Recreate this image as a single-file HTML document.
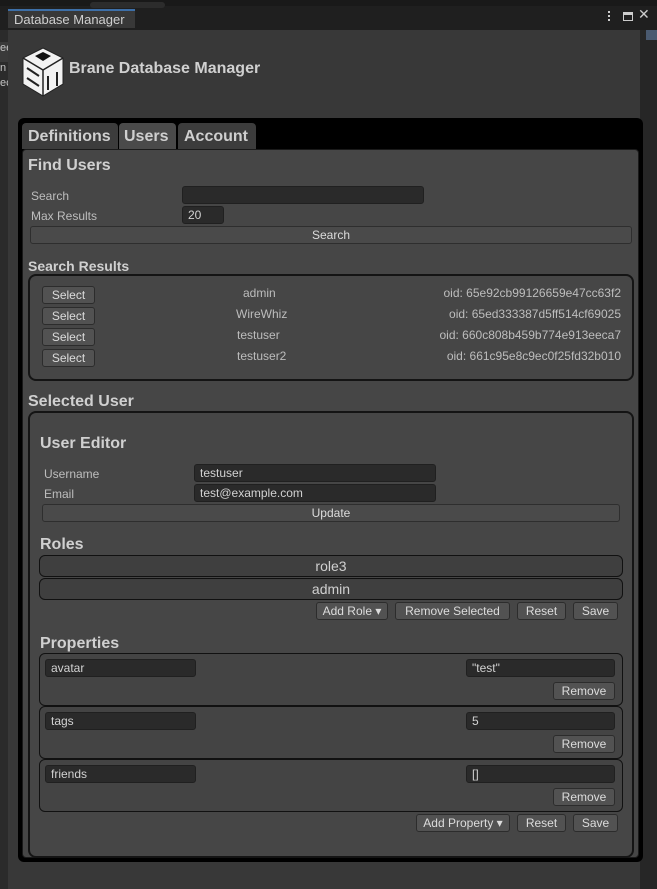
<!DOCTYPE html>
<html><head><style>
*{box-sizing:border-box;margin:0;padding:0}
body{width:657px;height:889px;background:#383838;position:relative;overflow:hidden;font-family:"Liberation Sans",sans-serif;color:#c4c4c4;font-size:12px}
.a{position:absolute}
.f{position:absolute;background:#2a2a2a;border:1px solid #202020;border-radius:3px;height:18px;padding-left:5px;line-height:17px;color:#d2d2d2;font-size:12px}
.b{position:absolute;background:#525252;border:1px solid #2c2c2c;border-radius:3px;height:18px;line-height:17px;text-align:center;color:#dcdcdc;font-size:12px}
.wb{background:#4a4a4a;border-color:#2e2e2e}
.h{position:absolute;font-weight:bold;font-size:16px;color:#d0d0d0;margin-top:1px}
.box{position:absolute;border:2px solid #141414;border-radius:8px}
.lab{position:absolute;font-size:12px;color:#bdbdbd;margin-top:1px}
.role{position:absolute;left:39px;width:584px;height:22px;background:#3f3f3f;border:1px solid #111;border-radius:6px;text-align:center;line-height:20px;font-size:14px;color:#d0d0d0}
.pb{position:absolute;left:39px;width:584px;height:53px;border:1px solid #111;border-radius:6px;background:#444}
</style></head><body>
<div class="a" style="left:0;top:0;width:657px;height:30px;background:#1f1f1f"></div>
<div class="a" style="left:0;top:0;width:657px;height:6px;background:#191919"></div>
<div class="a" style="left:90px;top:2px;width:75px;height:6px;background:#2c2c2c;border-radius:3px"></div>
<div class="a" style="left:0;top:30px;width:8px;height:859px;background:#2b2b2b"></div>
<div class="a" style="left:0;top:42px;width:8px;height:20px;background:#3a3a3a;font-size:11px;overflow:hidden">ee</div>
<div class="a" style="left:0;top:62px;width:8px;font-size:11px;overflow:hidden">n</div>
<div class="a" style="left:0;top:77px;width:8px;font-size:11px;overflow:hidden">ec</div>
<div class="a" style="left:8px;top:9px;width:127px;height:21px;background:#383838;border-top:2px solid #3d6fa8;padding-left:6px;line-height:18px;font-size:13px;color:#cfcfcf">Database Manager</div>
<div class="a" style="left:8px;top:28px;width:632px;height:2px;background:#1f1f1f"></div>
<div class="a" style="left:8px;top:30px;width:632px;height:859px;background:#383838"></div>
<div class="a" style="left:640px;top:30px;width:17px;height:859px;background:#262626"></div>
<div class="a" style="left:646px;top:30px;width:11px;height:10px;background:#4a5a70"></div>
<div class="a" style="left:608px;top:11px;width:2px;height:2px;background:#ccc;box-shadow:0 4px #ccc,0 8px #ccc"></div>
<div class="a" style="left:623px;top:12px;width:10px;height:9px;border:1px solid #ccc;border-top:3px solid #ccc"></div>
<div class="a" style="left:638px;top:6px;font-size:14px;color:#ccc">✕</div>
<svg class="a" style="left:21px;top:46px" width="44" height="52" viewBox="0 0 44 52">
<path d="M22 2 L42 12 L42 38 L22 50 L2 38 L2 12 Z" fill="#f2f2f2" stroke="#222" stroke-width="1"/>
<path d="M2 12 L22 24 L42 12 M22 24 L22 50" stroke="#222" stroke-width="1.5" fill="none"/>
<path d="M14 10 L22 6 L30 10 L22 15 Z" fill="#111"/>
<path d="M6 22 L18 30 M6 32 L18 40 M27 30 L27 44 M36 26 L36 40" stroke="#222" stroke-width="2" fill="none"/>
</svg>
<div class="h" style="left:69px;top:59px;font-size:16px">Brane Database Manager</div>
<div class="a" style="left:18px;top:118px;width:625px;height:744px;background:#000;border-radius:6px"></div>
<div class="a" style="left:22px;top:123px;width:96px;height:26px;background:#3c3c3c;border-radius:4px 4px 0 0;font-size:16px;font-weight:bold;line-height:27px;padding-left:6px;color:#cfcfcf">Definitions</div>
<div class="a" style="left:119px;top:123px;width:57px;height:26px;background:#4a4a4a;border-radius:4px 4px 0 0;font-size:16px;font-weight:bold;line-height:27px;padding-left:5px;color:#cfcfcf">Users</div>
<div class="a" style="left:178px;top:123px;width:78px;height:26px;background:#3c3c3c;border-radius:4px 4px 0 0;font-size:16px;font-weight:bold;line-height:27px;padding-left:6px;color:#cfcfcf">Account</div>
<div class="a" style="left:22px;top:149px;width:617px;height:709px;background:#464646;border:1px solid #1a1a1a;border-radius:4px"></div>
<div class="h" style="left:28px;top:156px">Find Users</div>
<div class="lab" style="left:31px;top:188px">Search</div>
<div class="f" style="left:182px;top:186px;width:242px"></div>
<div class="lab" style="left:31px;top:208px">Max Results</div>
<div class="f" style="left:182px;top:206px;width:42px">20</div>
<div class="b wb" style="left:30px;top:226px;width:602px">Search</div>
<div class="h" style="left:28px;top:257px;font-size:14px">Search Results</div>
<div class="box" style="left:28px;top:274px;width:606px;height:107px"></div>
<div class="b" style="left:42px;top:286px;width:53px">Select</div>
<div class="b" style="left:42px;top:307px;width:53px">Select</div>
<div class="b" style="left:42px;top:328px;width:53px">Select</div>
<div class="b" style="left:42px;top:349px;width:53px">Select</div>
<div class="lab" style="left:243px;top:285px">admin</div>
<div class="lab" style="left:236px;top:306px">WireWhiz</div>
<div class="lab" style="left:237px;top:327px">testuser</div>
<div class="lab" style="left:237px;top:348px">testuser2</div>
<div class="lab" style="right:36px;top:285px">oid: 65e92cb99126659e47cc63f2</div>
<div class="lab" style="right:36px;top:306px">oid: 65ed333387d5ff514cf69025</div>
<div class="lab" style="right:36px;top:327px">oid: 660c808b459b774e913eeca7</div>
<div class="lab" style="right:36px;top:348px">oid: 661c95e8c9ec0f25fd32b010</div>
<div class="h" style="left:28px;top:392px">Selected User</div>
<div class="box" style="left:28px;top:411px;width:606px;height:447px"></div>
<div class="h" style="left:40px;top:434px">User Editor</div>
<div class="lab" style="left:44px;top:466px">Username</div>
<div class="f" style="left:194px;top:464px;width:242px">testuser</div>
<div class="lab" style="left:44px;top:486px">Email</div>
<div class="f" style="left:194px;top:484px;width:242px">test@example.com</div>
<div class="b wb" style="left:42px;top:504px;width:578px">Update</div>
<div class="h" style="left:40px;top:535px">Roles</div>
<div class="role" style="top:555px">role3</div>
<div class="role" style="top:578px">admin</div>
<div class="b" style="left:316px;top:602px;width:72px">Add Role ▾</div>
<div class="b" style="left:395px;top:602px;width:115px">Remove Selected</div>
<div class="b" style="left:517px;top:602px;width:49px">Reset</div>
<div class="b" style="left:573px;top:602px;width:45px">Save</div>
<div class="h" style="left:40px;top:634px">Properties</div>
<div class="pb" style="top:653px"></div>
<div class="f" style="left:45px;top:659px;width:151px">avatar</div>
<div class="f" style="left:466px;top:659px;width:149px">"test"</div>
<div class="b" style="left:553px;top:682px;width:62px">Remove</div>
<div class="pb" style="top:706px"></div>
<div class="f" style="left:45px;top:712px;width:151px">tags</div>
<div class="f" style="left:466px;top:712px;width:149px">5</div>
<div class="b" style="left:553px;top:735px;width:62px">Remove</div>
<div class="pb" style="top:759px"></div>
<div class="f" style="left:45px;top:765px;width:151px">friends</div>
<div class="f" style="left:466px;top:765px;width:149px">[]</div>
<div class="b" style="left:553px;top:788px;width:62px">Remove</div>
<div class="b" style="left:416px;top:814px;width:94px">Add Property ▾</div>
<div class="b" style="left:517px;top:814px;width:49px">Reset</div>
<div class="b" style="left:573px;top:814px;width:45px">Save</div>
</body></html>
